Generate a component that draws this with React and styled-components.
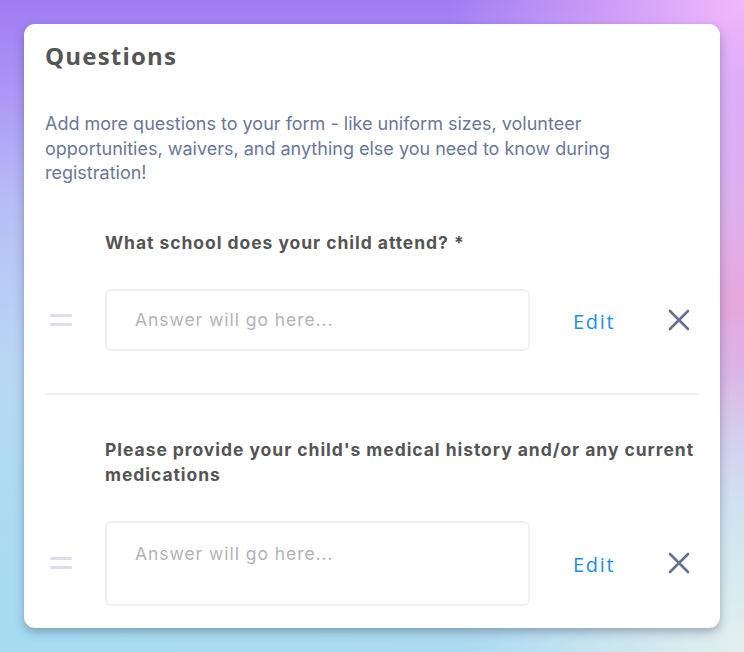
import styled, { createGlobalStyle } from "styled-components";

const GlobalStyle = createGlobalStyle`
  html, body {
    margin: 0;
    padding: 0;
    height: 100%;
  }
  body {
    font-family: Inter, "Liberation Sans", sans-serif;
    background:
      radial-gradient(circle at 100% 0%, #f2b8fb 0%, rgba(242, 184, 251, 0) 30%),
      radial-gradient(circle at 100% 100%, #e4f0ee 0%, rgba(228, 240, 238, 0) 28%),
      radial-gradient(ellipse at 100% 45%, #e6a6dc 0%, rgba(230, 166, 220, 0) 45%),
      radial-gradient(ellipse at 0% 100%, #a6dcf2 0%, rgba(166, 220, 242, 0) 60%),
      linear-gradient(180deg, #a07cf3 0%, #b9b4f6 30%, #c9d6f6 60%, #acdaf0 100%);
    min-height: 652px;
  }
`;

const questions = [
  { id: 1, label: "What school does your child attend? *", tall: false },
  {
    id: 2,
    label:
      "Please provide your child's medical history and/or any current medications",
    tall: true,
  },
];

const App = () => {
  return (
    <>
      <GlobalStyle />
      <Page>
        <Card>
          <Title>Questions</Title>
          <Description>
            Add more questions to your form - like uniform sizes, volunteer
            opportunities, waivers, and anything else you need to know during
            registration!
          </Description>
          <List>
            {questions.map((q) => (
              <Question key={q.id}>
                <Label>{q.label}</Label>
                <Row>
                  <Handle>
                    <span />
                    <span />
                  </Handle>
                  <AnswerBox tall={q.tall}>Answer will go here...</AnswerBox>
                  <EditButton>Edit</EditButton>
                  <RemoveButton aria-label="Remove">
                    <svg width="22" height="22" viewBox="0 0 22 22">
                      <path
                        d="M2 2 L20 20 M20 2 L2 20"
                        stroke="#66708f"
                        strokeWidth="2.6"
                        strokeLinecap="round"
                      />
                    </svg>
                  </RemoveButton>
                </Row>
              </Question>
            ))}
          </List>
        </Card>
      </Page>
    </>
  );
};

const Page = styled.main`
  padding: 24px;
  box-sizing: border-box;
`;

const Card = styled.section`
  width: 696px;
  box-sizing: border-box;
  background: #fff;
  border-radius: 11px;
  box-shadow: 0 4px 10px rgba(40, 50, 80, 0.35);
  padding: 16px 21px 22px;
`;

const Title = styled.h2`
  margin: 0;
  font-family: "Open Sans", "Liberation Sans", sans-serif;
  font-weight: 700;
  font-size: 24px;
  line-height: 32px;
  color: #555555;
  letter-spacing: 1.2px;
`;

const Description = styled.p`
  margin: 40px 0 0;
  font-size: 18px;
  line-height: 24.5px;
  color: #6b7799;
`;

const List = styled.div`
  display: flex;
  flex-direction: column;
`;

const Question = styled.div`
  padding: 44px 0 42px;
  & + & {
    border-top: 2px solid #f0f1f7;
    padding-top: 42px;
    padding-bottom: 0;
  }
`;

const Label = styled.div`
  padding-left: 60px;
  font-size: 17.5px;
  line-height: 25px;
  font-weight: 700;
  letter-spacing: 0.95px;
  color: #555555;
`;

const Row = styled.div`
  display: flex;
  align-items: center;
  margin-top: 34px;
`;

const Handle = styled.div`
  width: 60px;
  display: flex;
  flex-direction: column;
  gap: 6px;
  padding-left: 5px;
  box-sizing: border-box;
  span {
    display: block;
    width: 22px;
    height: 3px;
    border-radius: 2px;
    background: #dcdeee;
  }
`;

const AnswerBox = styled.div`
  width: 425px;
  height: ${(p) => (p.tall ? "85px" : "62px")};
  box-sizing: border-box;
  border: 2px solid #eef0f8;
  border-radius: 6px;
  padding: ${(p) => (p.tall ? "19px 28px" : "0 28px")};
  display: flex;
  align-items: ${(p) => (p.tall ? "flex-start" : "center")};
  font-size: 17.5px;
  line-height: 24px;
  letter-spacing: 0.95px;
  color: #b3b3b8;
`;

const EditButton = styled.button`
  margin-left: 43px;
  margin-top: 3px;
  background: none;
  border: none;
  padding: 0;
  font-family: "Open Sans", "Liberation Sans", sans-serif;
  font-size: 20px;
  font-weight: 500;
  letter-spacing: 1.7px;
  color: #1a8fe3;
  cursor: pointer;
`;

const RemoveButton = styled.button`
  margin-left: auto;
  margin-right: 9px;
  background: none;
  border: none;
  padding: 0;
  display: flex;
  cursor: pointer;
`;

export default App;
